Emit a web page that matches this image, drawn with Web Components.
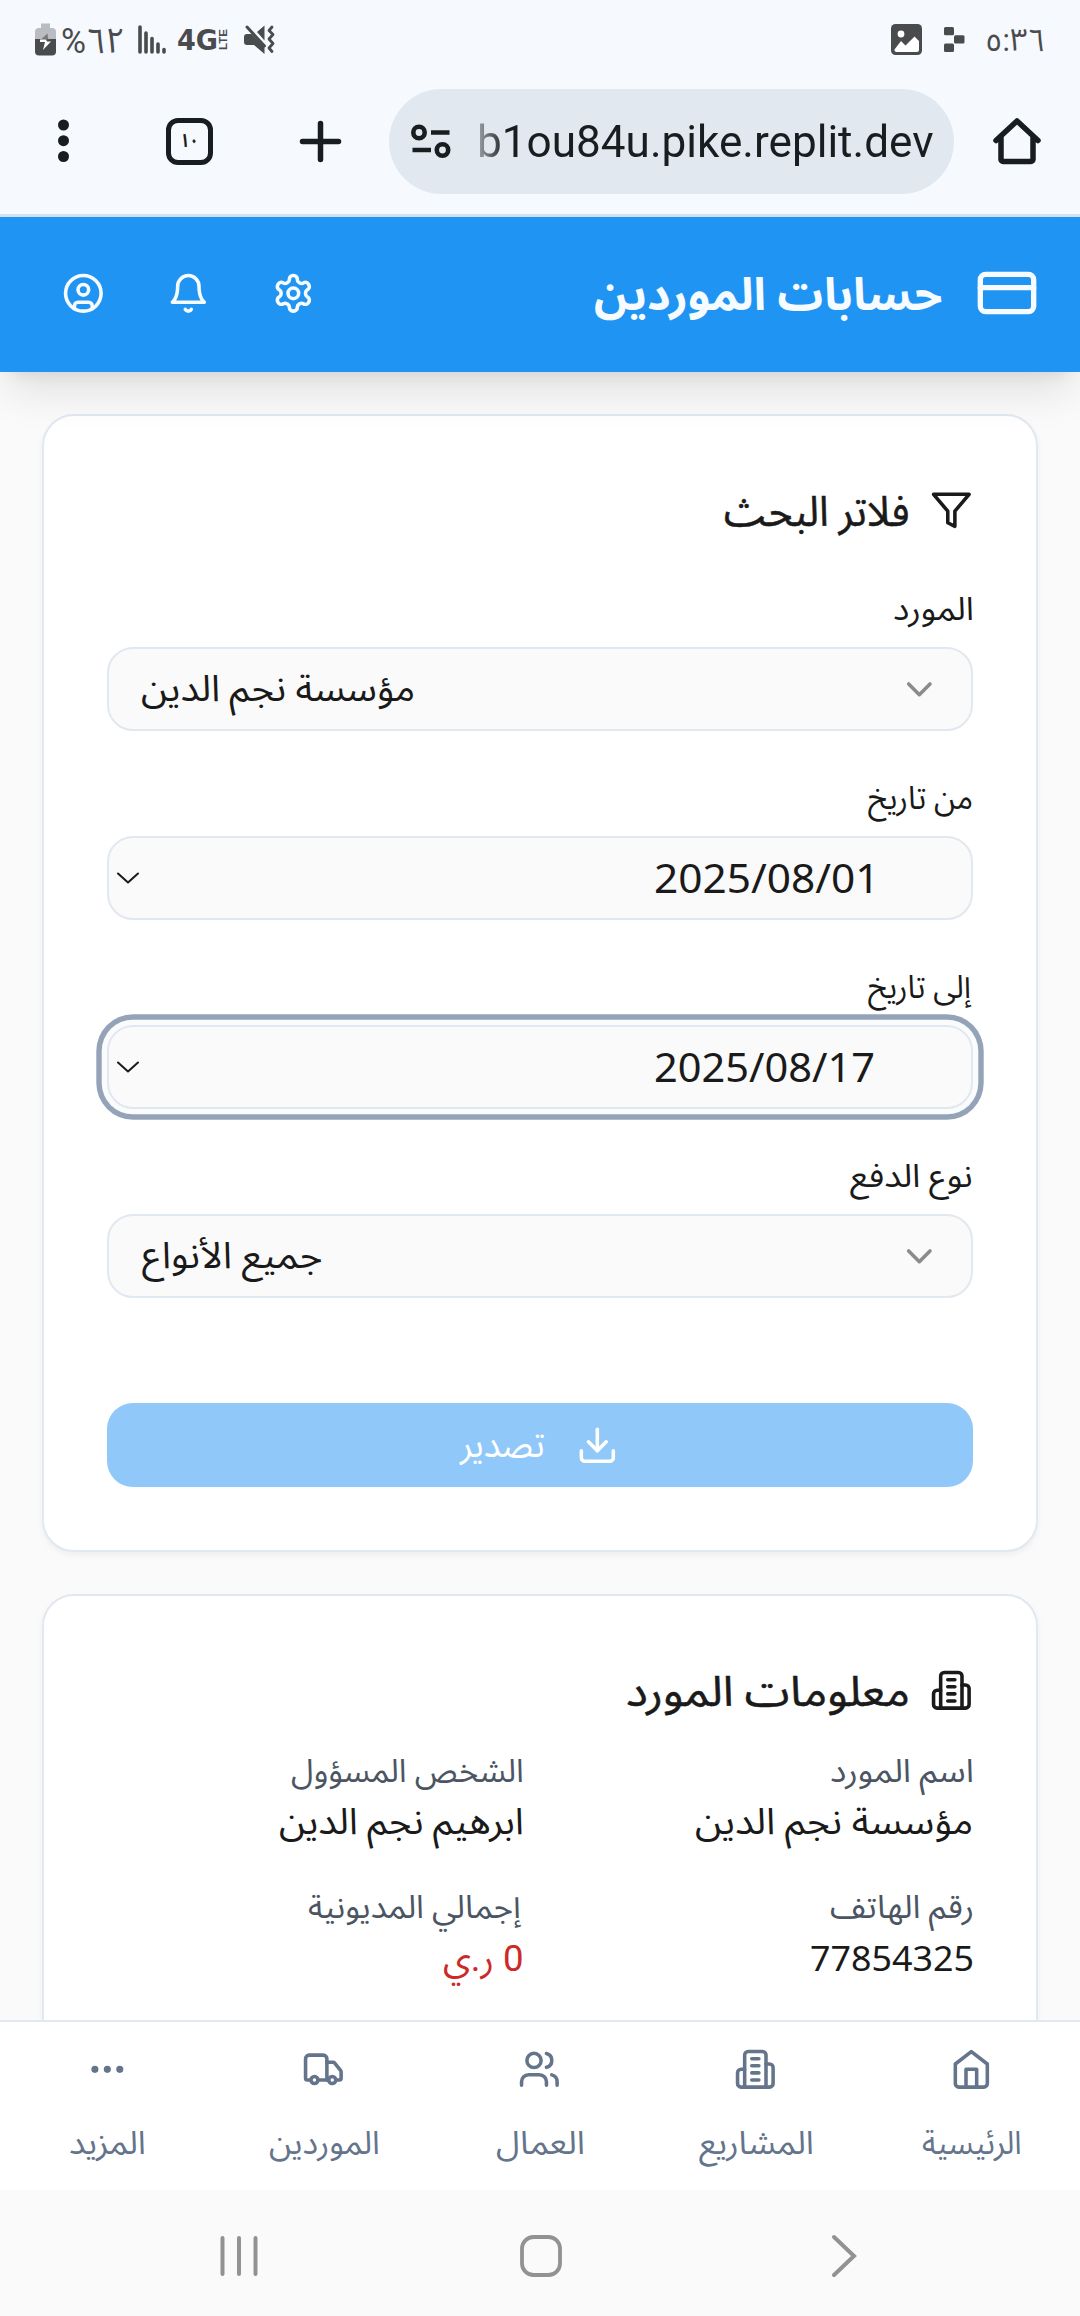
<!DOCTYPE html>
<html lang="ar" dir="rtl">
<head>
<meta charset="utf-8">
<title>حسابات الموردين</title>
<style>
  html, body { margin: 0; padding: 0; }
  body { width: 1080px; height: 2316px; overflow: hidden; background: #fafafa; color: #1a1a1a;
         font-family: "Noto Sans Arabic", "DejaVu Sans", sans-serif; }
</style>
</head>
<body>
<phone-screen>
  <status-bar></status-bar>
  <browser-bar url="b1ou84u.pike.replit.dev" tabs="١٠"></browser-bar>
  <app-header heading="حسابات الموردين"></app-header>
  <app-content>
    <ui-card heading="فلاتر البحث" heading-width="183" icon="filter">
      <ui-field label="المورد" label-width="78" kind="select" value="مؤسسة نجم الدين" value-width="272"></ui-field>
      <ui-field label="من تاريخ" label-width="104" kind="date" value="2025/08/01" value-width="216"></ui-field>
      <ui-field label="إلى تاريخ" label-width="104" kind="date" value="2025/08/17" value-width="219" focused></ui-field>
      <ui-field label="نوع الدفع" label-width="122" kind="select" value="جميع الأنواع" value-width="180"></ui-field>
      <ui-button label="تصدير"></ui-button>
    </ui-card>
    <ui-card heading="معلومات المورد" heading-width="281" icon="building">
      <info-grid>
        <info-item label="اسم المورد" label-width="141" value="مؤسسة نجم الدين" value-width="276"></info-item>
        <info-item label="الشخص المسؤول" label-width="231" value="ابرهيم نجم الدين" value-width="242"></info-item>
        <info-item label="رقم الهاتف" label-width="142" value="77854325" value-width="161"></info-item>
        <info-item label="إجمالي المديونية" label-width="214" value="0 ر.ي" value-width="78" danger></info-item>
      </info-grid>
    </ui-card>
  </app-content>
  <bottom-nav>
    <nav-item icon="home" label="الرئيسية" width="98"></nav-item>
    <nav-item icon="building" label="المشاريع" width="113"></nav-item>
    <nav-item icon="users" label="العمال" width="87"></nav-item>
    <nav-item icon="truck" label="الموردين" width="109"></nav-item>
    <nav-item icon="more" label="المزيد" width="74"></nav-item>
  </bottom-nav>
  <system-nav></system-nav>
</phone-screen>

<script>
const ICONS = {
  user: '<circle cx="12" cy="12" r="10"/><circle cx="12" cy="10" r="3"/><path d="M7 20.662V19a2 2 0 0 1 2-2h6a2 2 0 0 1 2 2v1.662"/>',
  bell: '<path d="M6 8a6 6 0 0 1 12 0c0 7 3 9 3 9H3s3-2 3-9"/><path d="M10.3 21a1.94 1.94 0 0 0 3.4 0"/>',
  settings: '<path d="M12.22 2h-.44a2 2 0 0 0-2 2v.18a2 2 0 0 1-1 1.73l-.43.25a2 2 0 0 1-2 0l-.15-.08a2 2 0 0 0-2.73.73l-.22.38a2 2 0 0 0 .73 2.73l.15.1a2 2 0 0 1 1 1.72v.51a2 2 0 0 1-1 1.74l-.15.09a2 2 0 0 0-.73 2.73l.22.38a2 2 0 0 0 2.73.73l.15-.08a2 2 0 0 1 2 0l.43.25a2 2 0 0 1 1 1.73V20a2 2 0 0 0 2 2h.44a2 2 0 0 0 2-2v-.18a2 2 0 0 1 1-1.73l.43-.25a2 2 0 0 1 2 0l.15.08a2 2 0 0 0 2.73-.73l.22-.39a2 2 0 0 0-.73-2.73l-.15-.08a2 2 0 0 1-1-1.74v-.5a2 2 0 0 1 1-1.74l.15-.09a2 2 0 0 0 .73-2.73l-.22-.38a2 2 0 0 0-2.73-.73l-.15.08a2 2 0 0 1-2 0l-.43-.25a2 2 0 0 1-1-1.73V4a2 2 0 0 0-2-2z"/><circle cx="12" cy="12" r="3"/>',
  card: '<rect x="2" y="5" width="20" height="14" rx="2"/><path d="M2 10h20"/>',
  filter: '<path d="M22 3H2l8 9.46V19l4 2v-8.54z"/>',
  chevron: '<path d="m6 9 6 6 6-6"/>',
  download: '<path d="M21 15v4a2 2 0 0 1-2 2H5a2 2 0 0 1-2-2v-4"/><path d="m7 10 5 5 5-5"/><path d="M12 15V3"/>',
  building: '<path d="M6 22V4a2 2 0 0 1 2-2h8a2 2 0 0 1 2 2v18Z"/><path d="M6 12H4a2 2 0 0 0-2 2v6a2 2 0 0 0 2 2h2"/><path d="M18 9h2a2 2 0 0 1 2 2v9a2 2 0 0 1-2 2h-2"/><path d="M10 6h4M10 10h4M10 14h4M10 18h4"/>',
  home: '<path d="m3 9 9-7 9 7v11a2 2 0 0 1-2 2H5a2 2 0 0 1-2-2z"/><path d="M9 22V12h6v10"/>',
  users: '<path d="M16 21v-2a4 4 0 0 0-4-4H6a4 4 0 0 0-4 4v2"/><circle cx="9" cy="7" r="4"/><path d="M22 21v-2a4 4 0 0 0-3-3.87"/><path d="M16 3.13a4 4 0 0 1 0 7.75"/>',
  truck: '<path d="M14 18V6a2 2 0 0 0-2-2H4a2 2 0 0 0-2 2v11a1 1 0 0 0 1 1h2"/><path d="M15 18H9"/><path d="M19 18h2a1 1 0 0 0 1-1v-3.65a1 1 0 0 0-.22-.624l-3.48-4.35A1 1 0 0 0 17.52 8H14"/><circle cx="17" cy="18" r="2"/><circle cx="7" cy="18" r="2"/>',
  more: '<circle cx="12" cy="12" r="1"/><circle cx="19" cy="12" r="1"/><circle cx="5" cy="12" r="1"/>'
};

class Base extends HTMLElement {
  connectedCallback() {
    if (!this.shadowRoot) this.attachShadow({ mode: 'open' }).innerHTML = this.render();
    this.ready && this.ready();
  }
  at(n) { return this.getAttribute(n) || ''; }
}
const define = (name, cls) => customElements.define(name, cls);

/* Line of text whose ink spans `w` pixels; `a` is the height of its tall
   letters and `b` the distance from the top of the box to the baseline. */
define('fit-text', class extends Base {
  render() {
    return `<style>
      :host { display: block; flex: none; direction: ltr; text-align: left; line-height: 1; white-space: nowrap; }
      span { display: inline-block; transform-origin: 0 0; }
      i { display: inline-block; width: 0; height: 0; }
    </style><span><slot></slot><i></i></span>`;
  }
  ready() {
    const text = this.textContent.trim(), w = +this.at('w'), a = +this.at('a'), b = +this.at('b');
    const latin = /^[\x20-\x7e]+$/.test(text);
    const family = this.at('family') || (latin ? '"Noto Sans", sans-serif' : 'Roboto, "Noto Sans Arabic", "DejaVu Sans", sans-serif');
    const weight = this.at('weight') || '400';
    const ctx = document.createElement('canvas').getContext('2d');
    ctx.font = `${weight} 100px ${family}`;
    const size = a * 100 / ctx.measureText(latin ? '5' : 'ا').actualBoundingBoxAscent;
    ctx.font = `${weight} ${size}px ${family}`;
    ctx.direction = this.hasAttribute('ltr') || latin ? 'ltr' : 'rtl';
    ctx.textAlign = 'left';
    const m = ctx.measureText(text);
    const k = w / (m.actualBoundingBoxLeft + m.actualBoundingBoxRight);
    this.style.width = w + 'px';
    this.style.height = (this.at('h') || b) + 'px';
    const span = this.shadowRoot.querySelector('span');
    span.style.font = `${weight} ${size}px/1 ${family}`;
    span.style.direction = ctx.direction;
    const base = this.shadowRoot.querySelector('i').getBoundingClientRect().bottom - this.getBoundingClientRect().top;
    span.style.transform = `translate(${m.actualBoundingBoxLeft * k}px, ${b - base}px) scaleX(${k})`;
  }
});

define('ui-icon', class extends Base {
  render() {
    const s = this.at('size') || 42.66;
    return `<style>:host{display:block;flex:none;width:${s}px;height:${s}px}svg{display:block;width:100%;height:100%}</style>
      <svg viewBox="0 0 24 24" fill="none" stroke="currentColor" stroke-width="2" stroke-linecap="round" stroke-linejoin="round">${ICONS[this.at('name')]}</svg>`;
  }
});

define('phone-screen', class extends Base {
  render() { return `<style>:host{display:flex;flex-direction:column;width:1080px;height:2316px;overflow:hidden}</style><slot></slot>`; }
});

define('status-bar', class extends Base {
  render() {
    return `<style>
      :host{display:flex;flex:none;direction:ltr;justify-content:space-between;height:80px;box-sizing:border-box;padding:20px 37px 0 35px;background:#f6f9fe;color:#4a4b4d}
      div{display:flex;align-items:flex-start} svg{display:block;flex:none;overflow:visible}
    </style>
    <div>
      <svg width="21" height="40" viewBox="0 0 21 40"><path d="M6 3.500h9v5h-9z" fill="#b9bcc1"/><path d="M0 20V12a4 4 0 0 1 4-4h13a4 4 0 0 1 4 4v8z" fill="#b9bcc1"/><path d="M0 19h21v12.500a4 4 0 0 1-4 4H4a4 4 0 0 1-4-4z" fill="#4a4b4d"/><path d="M12.500 13.500 6 19.500h9l-2-1z" fill="#77797c"/><path d="M5 19.500h6l1 2h4L8 30l2-8H5z" fill="#fff"/></svg>
      <fit-text style="margin-left:6px" w="61" a="25" b="32.500" ltr>%٦٢</fit-text>
      <svg style="margin-left:15px" width="28" height="40" fill="none" stroke="#4a4b4d" stroke-width="3.600" stroke-linecap="round"><path d="M2 7v25M8 13v19M14 18.500v13.500M20 24v8M26 29.500v2.500"/></svg>
      <svg style="margin-left:12px" width="50" height="40"><text x="-1" y="29.500" font-family="DejaVu Sans" font-weight="700" font-size="28" textLength="41" lengthAdjust="spacingAndGlyphs" fill="#4a4b4d">4G</text><text transform="translate(49 30) rotate(-90)" font-family="Liberation Sans" font-weight="700" font-size="11" textLength="21" lengthAdjust="spacingAndGlyphs" fill="#4a4b4d">LTE</text></svg>
      <svg style="margin-left:16px" width="31" height="40" fill="#4a4b4d"><path d="M0 17a3 3 0 0 1 3-3h4.500L20.500 27v7L10 25H3a3 3 0 0 1-3-3zM20.500 5.500v15L13 12z"/><path d="m3 7 17.500 19" stroke="#4a4b4d" stroke-width="3" stroke-linecap="round"/><path d="m28 7-3 3.500 4 4-4 4.500 4 4.500-4 4.500 3 3.500" fill="none" stroke="#4a4b4d" stroke-width="2.800" stroke-linecap="round" stroke-linejoin="round"/></svg>
    </div>
    <div>
      <svg width="31" height="40"><rect y="4" width="31" height="31" rx="4.500" fill="#4a4b4d"/><circle cx="10" cy="14" r="3.400" fill="#fff"/><path d="M3.500 29.500 10 21l4.500 4.500 9-9 4.500 4.500V30a2 2 0 0 1-2 2H5.500a2 2 0 0 1-2-2.500z" fill="#fff"/></svg>
      <svg style="margin-left:22px" width="21" height="40" fill="#4a4b4d"><rect y="7" width="10" height="8.300" rx="1.500"/><rect x="10" y="15.300" width="10.500" height="8.300" rx="1.500"/><rect y="23.600" width="10" height="8.300" rx="1.500"/></svg>
      <fit-text style="margin-left:22px" w="56" a="22.500" b="30.500" ltr>٥:٣٦</fit-text>
    </div>`;
  }
});

define('browser-bar', class extends Base {
  render() {
    return `<style>
      :host{display:flex;flex:none;direction:ltr;align-items:center;height:137px;box-sizing:border-box;padding:0 39px 12px 58px;background:#f6f9fe;color:#181d20;border-bottom:3px solid #d3e2ec}
      svg{display:block;flex:none}
      .tabs{display:flex;justify-content:center;width:47px;height:47px;box-sizing:border-box;border:5.500px solid #181d20;border-radius:12px;margin-left:97px}
      .pill{display:flex;align-items:center;width:565px;height:105px;margin-left:47px;box-sizing:border-box;padding-left:22px;border-radius:53px;background:#e1e8f0}
      .url{margin-left:29px;-webkit-mask-image:linear-gradient(90deg,#0006,#000 26px)}
    </style>
    <svg width="11" height="44"><g fill="#181d20"><circle cx="5.500" cy="6" r="5.500"/><circle cx="5.500" cy="21.700" r="5.500"/><circle cx="5.500" cy="37.500" r="5.500"/></g></svg>
    <div class="tabs"><fit-text w="13" a="14" b="24" weight="700" ltr>${this.at('tabs')}</fit-text></div>
    <svg style="margin-left:86px" width="43" height="43" stroke="#181d20" stroke-width="5.500" stroke-linecap="round"><path d="M21.500 3.500v36M3.500 21.500h36"/></svg>
    <div class="pill">
      <svg width="40" height="36" fill="none" stroke="#181d20" stroke-width="4.600"><circle cx="8" cy="9.500" r="5.700"/><path d="M20 9.500h18.500M1.500 27h18.500"/><circle cx="31.500" cy="27" r="5.700"/></svg>
      <fit-text class="url" w="453" a="32" b="51" h="70" family="Roboto">${this.at('url')}</fit-text>
    </div>
    <svg style="margin-left:39px" width="48" height="48" fill="none" stroke="#181d20" stroke-width="5.500" stroke-linecap="round" stroke-linejoin="round"><path d="M3 23.500 24 4l21 19.500M8 20v22.500a2 2 0 0 0 2 2h28a2 2 0 0 0 2-2V20"/></svg>`;
  }
});

define('app-header', class extends Base {
  render() {
    return `<style>
      :host{display:flex;flex:none;justify-content:space-between;align-items:center;height:155px;box-sizing:border-box;padding:0 41.500px 3px 62.300px;background:#2094f3;color:#f5fbff;z-index:2;
        box-shadow:0 27px 40px -8px rgba(0,0,0,.1),0 11px 16px -11px rgba(0,0,0,.1)}
      div{display:flex;align-items:center}
      .title{gap:33px}.actions{gap:62.400px}
    </style>
    <div class="title"><ui-icon name="card" size="64"></ui-icon><fit-text w="347" a="33" b="48.500" h="64" weight="700">${this.at('heading')}</fit-text></div>
    <div class="actions"><ui-icon name="settings"></ui-icon><ui-icon name="bell"></ui-icon><ui-icon name="user"></ui-icon></div>`;
  }
});

define('app-content', class extends Base {
  render() { return `<style>:host{display:flex;flex-direction:column;flex:1;min-height:0;overflow:hidden;gap:42px;padding:42px 42px 0;background:#fafafa}</style><slot></slot>`; }
});

define('ui-card', class extends Base {
  render() {
    return `<style>
      :host{display:block;flex:none;box-sizing:border-box;border:2px solid #e2e8f0;border-radius:32px;background:#fff;padding:64px 63px 63px;box-shadow:0 3px 6px rgba(0,0,0,.05)}
      header{display:flex;gap:22.500px;height:60px}
      ui-icon{margin-top:8.600px}
    </style>
    <header><ui-icon name="${this.at('icon')}"></ui-icon><fit-text w="${this.at('heading-width')}" a="29.500" b="45.500" weight="400" style="-webkit-text-stroke:.5px">${this.at('heading')}</fit-text></header>
    <slot></slot>`;
  }
});

define('ui-field', class extends Base {
  render() {
    const date = this.at('kind') === 'date';
    const ring = this.hasAttribute('focused') ? 'box-shadow:0 0 0 5.300px #fafbfc,0 0 0 10.700px #94a3b8;' : '';
    return `<style>
      :host{display:block;height:189px}
      :host(:first-of-type){margin-top:2px}
      .label{height:105px;padding-right:1.500px;box-sizing:border-box}
      .box{display:flex;justify-content:space-between;align-items:center;height:84px;box-sizing:border-box;border:2px solid #e2e8f0;border-radius:26px;background:#fafafa;${ring}
        padding:${date ? '0 100px 0 7px' : '0 30.500px 0 33px'}}
      ui-icon{color:#8b8b8b}
    </style>
    <div class="label"><fit-text w="${this.at('label-width')}" a="23" b="77.500">${this.at('label')}</fit-text></div>
    <div class="box">${date
      ? `<fit-text w="${this.at('value-width')}" a="29" b="54.500" h="80">${this.at('value')}</fit-text>
         <svg width="24" height="16" fill="none" stroke="#1a1a1a" stroke-width="2" stroke-linecap="round" stroke-linejoin="round"><path d="m2 3.500 10 9 10-9"/></svg>`
      : `<ui-icon name="chevron"></ui-icon><fit-text w="${this.at('value-width')}" a="26" b="52" h="80">${this.at('value')}</fit-text>`}
    </div>`;
  }
  ready() {
    if (this.at('kind') === 'date') this.shadowRoot.querySelector('.box').style.paddingRight = this.at('value').endsWith('7') ? '97.500px' : '100px';
  }
});

define('ui-button', class extends Base {
  render() {
    return `<style>
      :host{display:flex;justify-content:center;align-items:center;gap:31.500px;height:84px;box-sizing:border-box;padding-right:2.500px;margin-top:105px;border-radius:26px;background:#90c8f9;color:#fff}
    </style><ui-icon name="download"></ui-icon><fit-text w="85" a="26" b="53.700" h="84">${this.at('label')}</fit-text>`;
  }
});

define('info-grid', class extends Base {
  render() { return `<style>:host{display:grid;grid-template-columns:1fr 1fr;column-gap:33px;row-gap:16px;padding-top:20px}</style><slot></slot>`; }
});

define('info-item', class extends Base {
  render() {
    const num = /^\d+$/.test(this.at('value')), danger = this.hasAttribute('danger');
    return `<style>
      :host{display:flex;flex-direction:column;height:120px;padding-right:1.500px}
      .l{color:#4b5563}.v{color:${danger ? '#cc2929' : '#1a1a1a'}}
    </style>
    <fit-text class="l" w="${this.at('label-width')}" a="23" b="42">${this.at('label')}</fit-text>
    <fit-text class="v" w="${this.at('value-width')}" a="${num ? 25 : 26}" b="${danger ? 53 : num ? 52.5 : 52}">${this.at('value')}</fit-text>`;
  }
});

define('bottom-nav', class extends Base {
  render() { return `<style>:host{display:grid;flex:none;grid-template-columns:repeat(5,1fr);height:170px;box-sizing:border-box;border-top:2px solid #e2e8f0;background:#fff;z-index:1}</style><slot></slot>`; }
});

define('nav-item', class extends Base {
  render() {
    return `<style>:host{display:flex;flex-direction:column;align-items:center;padding:25.500px 1.500px 0 0;color:#64748b}</style>
      <ui-icon name="${this.at('icon')}"></ui-icon><fit-text w="${this.at('width')}" a="23" b="63.500">${this.at('label')}</fit-text>`;
  }
});

define('system-nav', class extends Base {
  render() {
    return `<style>:host{display:flex;direction:ltr;flex:none;height:126px;box-sizing:border-box;padding:44px 221px 0 219px;background:#fafafa}svg{display:block;flex:none}</style>
      <svg width="40" height="44" stroke="#929292" stroke-width="4" stroke-linecap="round"><path d="M3.500 4v36M20 4v36M36.500 4v36"/></svg>
      <svg style="margin-left:260px" width="44" height="44" fill="none" stroke="#929292" stroke-width="3.800"><rect x="3" y="3" width="38" height="38" rx="11.500"/></svg>
      <svg style="margin-left:267px" width="28" height="44" fill="none" stroke="#929292" stroke-width="4" stroke-linecap="round"><path d="m4 3 20 19L4 41"/></svg>`;
  }
});
</script>
</body>
</html>
